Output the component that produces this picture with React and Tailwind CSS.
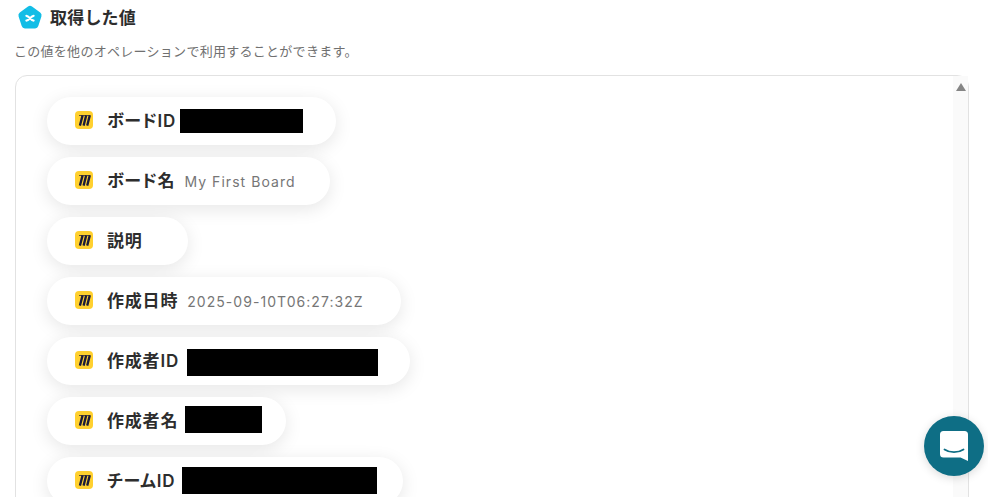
const rows = [
  { label: 'ボードID', w: 'w-[289px]', block: 'w-[123px] h-[24px] ml-[4px] mt-[2px]' },
  { label: 'ボード名', w: 'w-[283px]', value: 'My First Board' },
  { label: '説明', w: 'w-[141px]' },
  { label: '作成日時', w: 'w-[354px]', value: '2025-09-10T06:27:32Z' },
  { label: '作成者ID', w: 'w-[363px]', block: 'w-[191px] h-[27px] ml-[8px] mt-[4px]' },
  { label: '作成者名', w: 'w-[239px]', block: 'w-[77px] h-[27px] ml-[7px] mb-[1px]' },
  { label: 'チームID', w: 'w-[356px]', block: 'w-[195px] h-[27px] ml-[7px] mt-[1px]' },
];

const MiroIcon = () => (
  <svg width="18" height="18" viewBox="0 0 18 18" className="shrink-0">
    <rect width="18" height="18" rx="4" fill="#FFD02F" />
    <path d="M4.9 14.6L7.6 4.4M8.6 14.6L11.2 4.4M12.2 14.6L14.8 4.4" fill="none" stroke="#1C1B3A" strokeWidth="2.3" />
    <path d="M4 4h11.5v.7H4z" fill="#1C1B3A" />
  </svg>
);

const ValueIcon = () => (
  <svg width="26" height="26" viewBox="0 0 26 26" className="shrink-0">
    <path d="M11 1.6a3.4 3.4 0 0 1 4 0l8.2 6a3.4 3.4 0 0 1 1.2 3.8l-3.1 9.6a3.4 3.4 0 0 1-3.2 2.4H7.9a3.4 3.4 0 0 1-3.2-2.4l-3.1-9.6a3.4 3.4 0 0 1 1.2-3.8z" fill="#12BDE6" />
    <path d="M9.4 10.8c2.6 0 4.6 4.8 7.2 4.8M16.6 10.8c-2.6 0-4.6 4.8-7.2 4.8" fill="none" stroke="#fff" strokeWidth="2.2" strokeLinecap="round" />
  </svg>
);

const ChatIcon = () => (
  <svg width="28" height="30" viewBox="0 0 28 30">
    <path d="M3.5 0h21A3.5 3.5 0 0 1 28 3.5V30l-7.5-3.4H3.5A3.5 3.5 0 0 1 0 23.1V3.5A3.5 3.5 0 0 1 3.5 0z" fill="#fff" />
    <path d="M4.5 18.5c5.5 3.6 13.5 3.6 19 0" fill="none" stroke="#0E6E85" strokeWidth="1.8" strokeLinecap="round" />
  </svg>
);

const App = () => {
  return (
    <div className="relative w-[988px] h-[497px] overflow-hidden bg-white font-['Inter','Noto_Sans_CJK_JP',sans-serif]">
      <div className="flex items-center gap-[7px] pl-[17px] pt-[4px] h-[31px]">
        <ValueIcon />
        <h2 className="text-[17px] font-semibold leading-[24px] tracking-[0.2px] text-[#2d2d2d]">取得した値</h2>
      </div>
      <p className="mt-[11px] pl-[14px] text-[13px] leading-[18px] tracking-[0.28px] text-[#707070]">
        この値を他のオペレーションで利用することができます。
      </p>
      <div className="ml-[15px] mt-[15px] w-[954px] h-[440px] flex border border-[#e2e2e2] rounded-tl-[12px] rounded-tr-[12px]">
        <div className="flex-1 flex flex-col gap-[12px] pl-[31px] pt-[21px]">
          {rows.map((row) => (
            <div
              key={row.label}
              className={`${row.w} h-[48px] shrink-0 flex items-center pl-[28px] pb-[2px] rounded-full bg-white shadow-[0_4px_18px_rgba(0,0,0,0.1)]`}
            >
              <MiroIcon />
              <span className="ml-[14px] mt-[3px] text-[17px] font-semibold tracking-[0.8px] [font-feature-settings:'palt'] text-[#2d2d2d] whitespace-nowrap">{row.label}</span>
              {row.value && (
                <span className="ml-[9px] mt-[2px] text-[14px] tracking-[1.05px] text-[#767676] whitespace-nowrap">{row.value}</span>
              )}
              {row.block && <span className={`bg-black ${row.block}`} />}
            </div>
          ))}
        </div>
        <div className="w-[15px] shrink-0 bg-[#fafafa] flex justify-center pt-[7px]">
          <svg width="10" height="8" viewBox="0 0 10 8">
            <path d="M5 0l5 8H0z" fill="#858585" />
          </svg>
        </div>
      </div>
      <button className="absolute left-[924px] top-[416px] w-[60px] h-[60px] rounded-full bg-[#0E6E85] shadow-[0_2px_10px_rgba(0,0,0,0.15)] flex items-center justify-center">
        <ChatIcon />
      </button>
    </div>
  );
};

export default App;
